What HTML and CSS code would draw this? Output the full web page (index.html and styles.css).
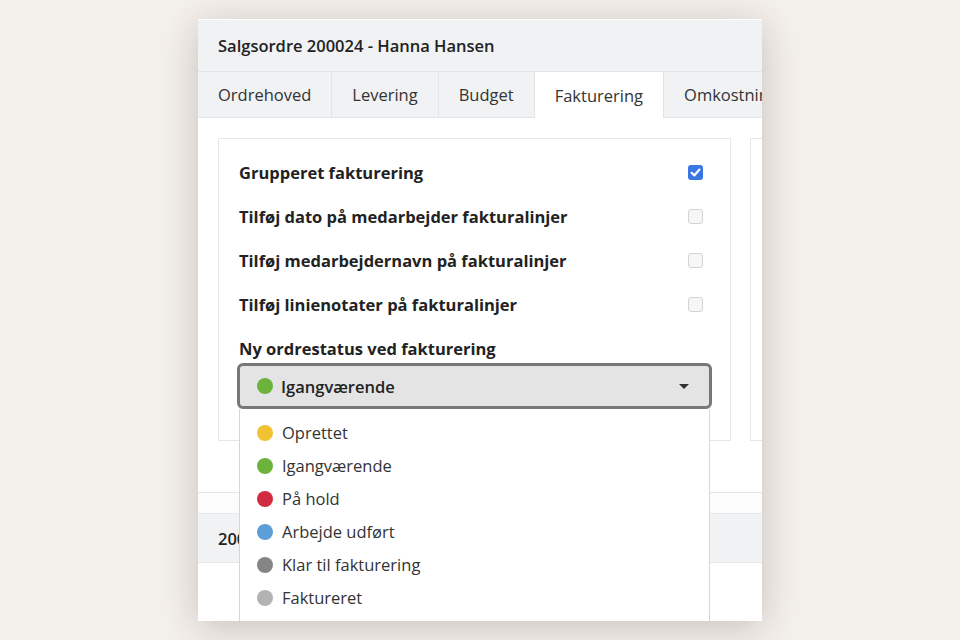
FILE: index.html
```html
<!DOCTYPE html>
<html lang="da">
<head>
<meta charset="utf-8">
<title>Salgsordre 200024</title>
<link rel="stylesheet" href="styles.css">
</head>
<body>
<div class="stage">
  <div class="window">
    <div class="header">Salgsordre 200024 - Hanna Hansen</div>
    <div class="tabs">
      <div class="tab">Ordrehoved</div>
      <div class="tab">Levering</div>
      <div class="tab">Budget</div>
      <div class="tab active">Fakturering</div>
      <div class="tab">Omkostninger</div>
    </div>
    <div class="content">
      <div class="panel">
        <div class="row"><span class="label">Grupperet fakturering</span><span class="check checked"><svg viewBox="0 0 15 15" width="15" height="15"><path d="M3.6 7.8 L6.3 10.4 L11.4 4.6" fill="none" stroke="#fff" stroke-width="2.2" stroke-linecap="round" stroke-linejoin="round"/></svg></span></div>
        <div class="row"><span class="label">Tilføj dato på medarbejder fakturalinjer</span><span class="check"></span></div>
        <div class="row"><span class="label">Tilføj medarbejdernavn på fakturalinjer</span><span class="check"></span></div>
        <div class="row"><span class="label">Tilføj linienotater på fakturalinjer</span><span class="check"></span></div>
        <div class="row field-label"><span class="label">Ny ordrestatus ved fakturering</span></div>
        <div class="select-wrap">
          <div class="select">
            <span class="dot green"></span>
            <span class="select-text">Igangværende</span>
            <span class="caret"></span>
          </div>
          <ul class="menu">
            <li><span class="dot yellow"></span>Oprettet</li>
            <li><span class="dot green"></span>Igangværende</li>
            <li><span class="dot red"></span>På hold</li>
            <li><span class="dot blue"></span>Arbejde udført</li>
            <li><span class="dot dark"></span>Klar til fakturering</li>
            <li><span class="dot light"></span>Faktureret</li>
          </ul>
        </div>
      </div>
      <div class="panel side"></div>
    </div>
    <div class="gap"></div>
    <div class="subheader">200024</div>
  </div>
</div>
</body>
</html>
```

FILE: styles.css
```css
html, body {
  margin: 0;
  padding: 0;
}
body {
  background: #f4f0ec;
  width: 960px;
  height: 640px;
  overflow: hidden;
  font-family: "Open Sans", "Noto Sans", sans-serif;
  color: #222;
}
.stage {
  padding: 19px 0 0 198px;
}
.window {
  width: 564px;
  height: 601px;
  background: #fff;
  border-top: 1px solid #fff;
  box-shadow: 0 6px 36px rgba(60, 40, 30, 0.24);
  overflow: hidden;
  position: relative;
}
.header {
  height: 51px;
  display: flex;
  align-items: center;
  padding: 0 20px;
  background: #f0f2f4;
  border-bottom: 1px solid #e2e5e8;
  font-size: 16.5px;
  font-weight: 600;
  color: #222;
}
.tabs {
  display: flex;
  height: 45px;
  background: #f0f2f4;
  border-bottom: 1px solid #e2e5e8;
}
.tab {
  display: flex;
  align-items: center;
  padding: 0 20px;
  border-right: 1px solid #e2e5e8;
  font-size: 16.5px;
  color: #333;
  white-space: nowrap;
}
.tab.active {
  background: #fff;
  margin-bottom: -1px;
}
.content {
  display: flex;
  gap: 19px;
  padding: 20px 0 51px 20px;
  border-bottom: 1px solid #e6e6e6;
}
.panel {
  width: 471px;
  flex: none;
  border: 1px solid #e6e6e6;
  padding: 11px 20px 31px 20px;
}
.panel.side {
  width: 60px;
  padding: 0;
}
.row {
  height: 44px;
  display: flex;
  align-items: center;
  justify-content: space-between;
  padding-right: 7px;
}
.row.field-label {
  height: 30px;
  margin-top: 7px;
}
.label {
  font-size: 16.5px;
  font-weight: 700;
  color: #222;
}
.check {
  width: 13px;
  height: 13px;
  border: 1px solid #d4d4d4;
  background: #f6f6f6;
  border-radius: 3px;
  display: flex;
}
.check.checked {
  width: 15px;
  height: 15px;
  border: none;
  background: #3a76e4;
}
.select-wrap {
  position: relative;
  margin: 0 -2px;
}
.select {
  height: 40px;
  border: 3px solid #777;
  border-radius: 6px;
  background: #e4e4e4;
  display: flex;
  align-items: center;
  padding: 0 20px 0 17px;
}
.select-text {
  font-size: 16.5px;
  font-weight: 600;
  margin-left: 8px;
  flex: 1;
  color: #222;
}
.caret {
  width: 0;
  height: 0;
  border-left: 5px solid transparent;
  border-right: 5px solid transparent;
  border-top: 5px solid #333;
}
.dot {
  width: 16px;
  height: 16px;
  border-radius: 50%;
  flex: none;
  display: inline-block;
}
.yellow { background: #f1c232; }
.green { background: #6cb33e; }
.red { background: #d22b3f; }
.blue { background: #5c9ed6; }
.dark { background: #858585; }
.light { background: #b3b3b3; }
.menu {
  position: absolute;
  left: 2px;
  right: 2px;
  top: 46px;
  margin: 0;
  padding: 7px 0 20px 0;
  list-style: none;
  background: #fff;
  border-left: 1px solid #d6d6d6;
  border-right: 1px solid #d6d6d6;
  z-index: 2;
}
.menu li {
  height: 33px;
  display: flex;
  align-items: center;
  gap: 9px;
  padding-left: 17px;
  font-size: 16.5px;
  color: #333;
}
.gap {
  height: 20px;
  background: #fcfcfc;
}
.subheader {
  height: 48px;
  display: flex;
  align-items: center;
  padding: 0 20px;
  background: #f0f2f4;
  border-top: 1px solid #e6e8ea;
  border-bottom: 1px solid #e6e8ea;
  font-size: 16.5px;
  font-weight: 600;
}
```
